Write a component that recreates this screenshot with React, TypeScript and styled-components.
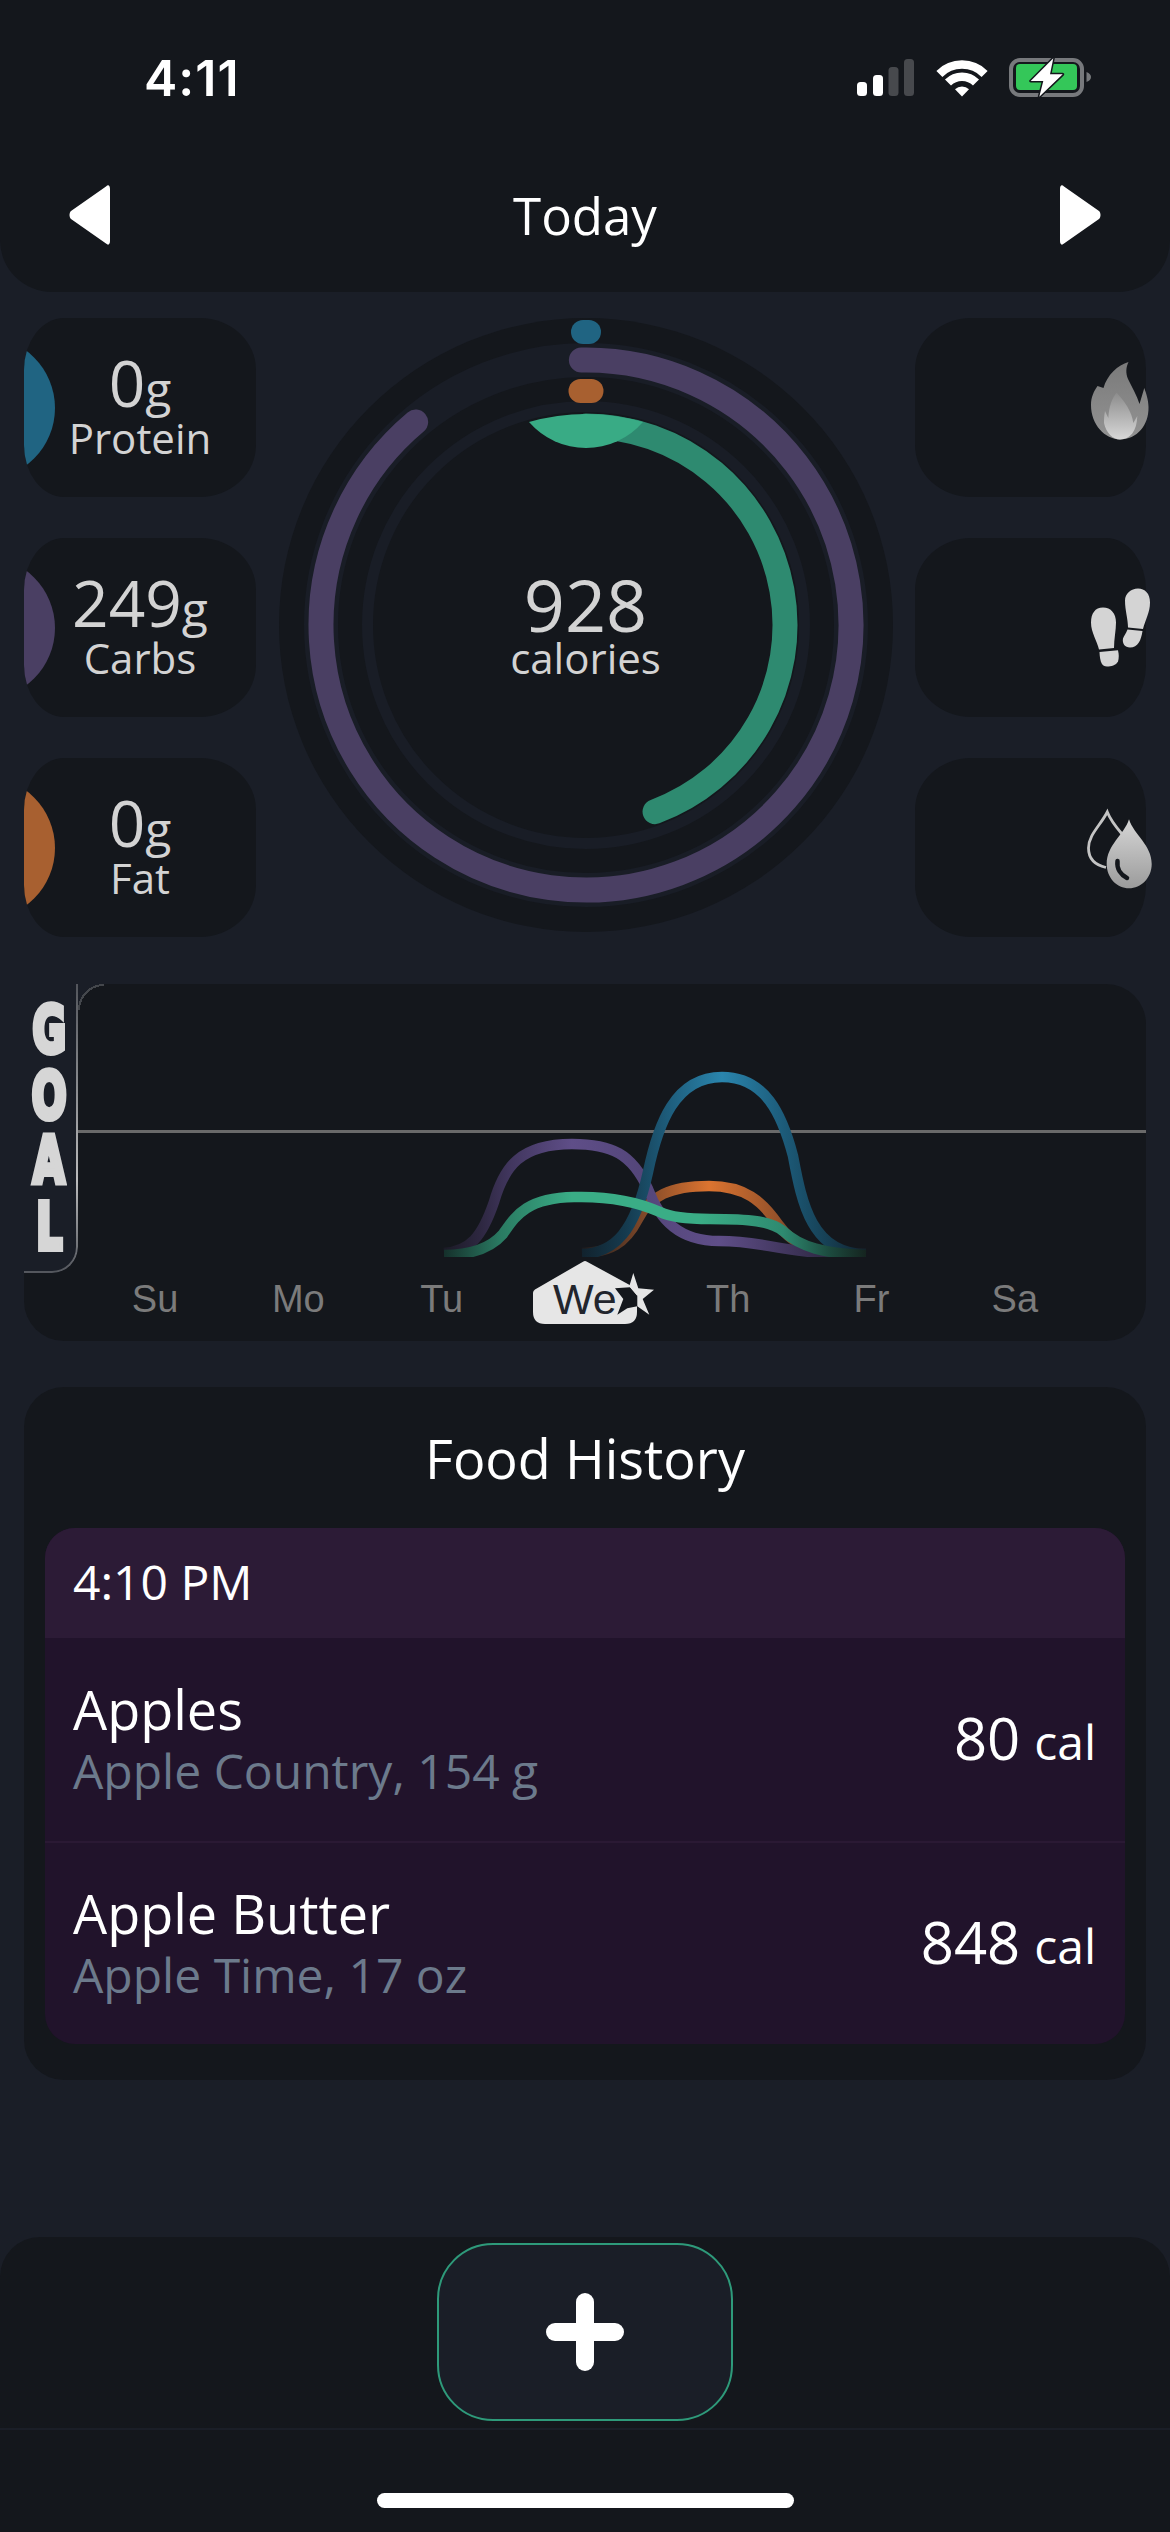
import React from "react";
import styled, { createGlobalStyle } from "styled-components";

const PAGE = "#1a1e27";
const PANEL = "#14171c";

const GlobalStyle = createGlobalStyle`
  html, body {
    margin: 0;
    padding: 0;
    background: ${PAGE};
  }
  * {
    box-sizing: border-box;
  }
`;

const Page = styled.div`
  width: 1170px;
  height: 2532px;
  display: flex;
  flex-direction: column;
  overflow: hidden;
  background: ${PAGE};
  font-family: "Open Sans", "Liberation Sans", sans-serif;
  color: #d3d3d3;
`;

/* header */
const Header = styled.header`
  height: 292px;
  background: ${PANEL};
  border-radius: 0 0 52px 52px;
`;

const StatusBar = styled.div`
  height: 155px;
  padding: 0 78px 0 144px;
  display: flex;
  align-items: center;
  justify-content: space-between;
`;

const Clock = styled.span`
  font-family: Inter, "Liberation Sans", sans-serif;
  font-size: 50px;
  font-weight: 600;
  letter-spacing: 1px;
  color: #fff;
`;

const Nav = styled.nav`
  height: 120px;
  padding: 0 69px;
  display: flex;
  align-items: center;
  justify-content: space-between;
`;

const NavTitle = styled.h1`
  margin: 0;
  font-size: 51px;
  font-weight: 400;
  line-height: 116px;
  color: #fff;
`;

/* macro row */
const MacroRow = styled.section`
  margin-top: 26px;
  padding: 0 24px;
  display: flex;
  justify-content: space-between;
  align-items: flex-start;
`;

const PillColumn = styled.div`
  display: flex;
  flex-direction: column;
  gap: 41px;
`;

const MacroPill = styled.div`
  position: relative;
  width: 232px;
  height: 179px;
  overflow: hidden;
  background: ${PANEL};
  border-radius: 40px 56px 56px 40px / 52px;
  display: flex;
  flex-direction: column;
  align-items: center;
  justify-content: center;
`;

const MacroTab = styled.span<{ $color: string }>`
  position: absolute;
  left: -112px;
  top: 50%;
  width: 143px;
  height: 143px;
  border-radius: 50%;
  transform: translateY(-50%);
  background: ${(p) => p.$color};
`;

const MacroValue = styled.div`
  font-size: 64px;
  line-height: 50px;
`;

const MacroUnit = styled.span`
  font-size: 48px;
`;

const MacroLabel = styled.div`
  margin-top: 3px;
  font-size: 42px;
  line-height: 41px;
`;

const ActivityPill = styled.div`
  width: 231px;
  height: 179px;
  background: ${PANEL};
  border-radius: 56px 40px 40px 56px / 52px;
  display: flex;
  align-items: center;
  justify-content: flex-end;
`;

const ActivityIcon = styled.svg`
  width: 80px;
  height: 100px;
  margin-right: -14px;
  flex: none;
`;

const RingWrap = styled.div`
  position: relative;
  width: 614px;
  height: 614px;
  flex: none;
`;

const RingText = styled.div`
  position: absolute;
  inset: 0;
  display: flex;
  flex-direction: column;
  align-items: center;
  justify-content: center;
`;

const RingValue = styled.div`
  font-size: 72px;
  line-height: 66px;
`;

const RingLabel = styled.div`
  font-size: 42px;
  line-height: 42px;
`;

/* weekly chart */
const ChartPanel = styled.section`
  margin: 47px 24px 0;
  height: 357px;
  background: ${PANEL};
  border-radius: 0 40px 40px 40px;
  overflow: hidden;
`;

const ChartTop = styled.div`
  display: flex;
  height: 289px;
`;

const GoalTab = styled.div`
  position: relative;
  width: 54px;
  flex: none;
  background: ${PAGE};
  border-bottom-right-radius: 26px;
  display: flex;
  flex-direction: column;
  align-items: center;
  padding: 14px 4px 0 0;

  &::before {
    content: "";
    position: absolute;
    inset: 0;
    border-right: 2px solid #d8d8d8;
    border-bottom: 2px solid #d8d8d8;
    border-bottom-right-radius: 26px;
    mask-image: linear-gradient(to bottom, rgba(0, 0, 0, 0.3), rgba(0, 0, 0, 0.85) 68%, rgba(0, 0, 0, 0.3));
  }

  &::after {
    content: "";
    position: absolute;
    left: 100%;
    top: 0;
    width: 26px;
    height: 26px;
    background: radial-gradient(circle at 100% 100%, transparent 24px, #44474c 24px, #44474c 26px, ${PAGE} 26px);
  }
`;

const GoalLetter = styled.span`
  height: 65.5px;
  font-family: "DejaVu Sans", sans-serif;
  font-size: 64px;
  font-weight: 700;
  line-height: 65.5px;
  color: #d6d6d6;
  -webkit-text-stroke: 6px #d6d6d6;
  transform: scaleX(0.64);
`;

const ChartSvg = styled.svg`
  display: block;
  width: 1068px;
  height: 289px;
  flex: none;
`;

const DayRow = styled.div`
  display: grid;
  grid-template-columns: repeat(7, 143.3px);
  padding-left: 59.4px;
`;

const Day = styled.span<{ $active?: boolean }>`
  position: relative;
  text-align: center;
  font-family: "Liberation Sans", Arial, sans-serif;
  font-size: ${(p) => (p.$active ? "43px" : "38px")};
  line-height: 52px;
  color: ${(p) => (p.$active ? "#22252d" : "#7b7b7b")};
`;

const DayLabel = styled.span`
  position: relative;
`;

const DayBadge = styled.svg`
  position: absolute;
  left: 6.7px;
  top: -24px;
  width: 150px;
  height: 85px;
`;

/* food history */
const FoodCard = styled.section`
  margin: 46px 24px 0;
  padding: 0 21px 36px;
  background: ${PANEL};
  border-radius: 40px;
`;

const FoodTitle = styled.h2`
  margin: 0;
  padding-top: 2px;
  font-size: 54px;
  font-weight: 400;
  line-height: 139px;
  text-align: center;
  color: #fff;
`;

const FoodList = styled.div`
  border-radius: 30px;
  overflow: hidden;
  background: #21132b;
`;

const FoodTime = styled.div`
  height: 110px;
  padding-left: 28px;
  background: #2c1b36;
  font-size: 48px;
  line-height: 108px;
  color: #fff;
`;

const FoodRow = styled.div`
  height: 203px;
  padding: 0 29px 0 28px;
  display: flex;
  align-items: center;
  justify-content: space-between;

  & + & {
    border-top: 2px solid #2a1934;
  }
`;

const FoodName = styled.div`
  font-size: 54px;
  line-height: 59px;
  color: #fff;
`;

const FoodMeta = styled.div`
  padding-top: 2px;
  font-size: 48px;
  line-height: 59px;
  color: #6c7a8c;
`;

const FoodCal = styled.div`
  font-size: 58px;
  line-height: 60px;
  color: #fff;
`;

const FoodCalUnit = styled.span`
  margin-left: 14px;
  font-size: 48px;
`;

/* footer */
const Footer = styled.footer`
  margin-top: auto;
  height: 295px;
  background: ${PANEL};
  border-radius: 40px 40px 0 0;
`;

const FooterBar = styled.div`
  height: 193px;
  border-bottom: 2px solid ${PAGE};
  display: flex;
  justify-content: center;
  padding-top: 6px;
`;

const AddButton = styled.button`
  width: 296px;
  height: 178px;
  padding: 0;
  background: ${PAGE};
  border: 2px solid #2e9a7a;
  border-radius: 56px;
  display: flex;
  align-items: center;
  justify-content: center;
`;

const HomeIndicator = styled.div`
  width: 417px;
  height: 15px;
  margin: 63px auto 0;
  border-radius: 8px;
  background: #fff;
`;

// point on a ring, degrees clockwise from 12 o'clock
function polar(r: number, deg: number) {
  const a = (deg * Math.PI) / 180;
  return { x: r * Math.sin(a), y: -r * Math.cos(a) };
}

function arcPath(r: number, from: number, to: number) {
  const s = polar(r, from);
  const e = polar(r, to);
  return `M${s.x} ${s.y} A${r} ${r} 0 ${to - from > 180 ? 1 : 0} 1 ${e.x} ${e.y}`;
}

function CalorieRing() {
  return (
    <svg width="614" height="614" viewBox="-307 -307 614 614">
      <circle r="307" fill="#14171c" />
      <circle r="265" fill="none" stroke="#191d26" strokeWidth="34" />
      <circle r="218.5" fill="none" stroke="#191d26" strokeWidth="11" />
      <rect x="-15" y="-305" width="30" height="24" rx="12" fill="#206482" />
      <rect x="-17.5" y="-246" width="35" height="24" rx="12" fill="#a86030" />
      <path d={arcPath(265, -1, 320)} fill="none" stroke="#4a3f63" strokeWidth="25" strokeLinecap="round" />
      <path d={arcPath(199, 0, 159.7)} fill="none" stroke="#2e8a70" strokeWidth="25" strokeLinecap="round" />
      <path d="M-57 -203 A211 211 0 0 1 57 -203 A75.5 75.5 0 0 1 -57 -203 Z" fill="#39ab85" />
    </svg>
  );
}

function NavArrow({ flip }: { flip?: boolean }) {
  return (
    <svg width="41" height="60" viewBox="0 0 41 60">
      <path
        transform={flip ? "matrix(-1 0 0 1 41 0)" : undefined}
        d="M37 1.5C39.5 -1 41 1 41 4L41 56C41 59 39.5 61 37 58.5L2 34C0 32 0 28 2 26Z"
        fill="#fff"
      />
    </svg>
  );
}

function StatusIcons() {
  return (
    <svg width="235" height="39" viewBox="857 58 235 39">
      <rect x="857" y="82" width="10" height="14" rx="3.5" fill="#fff" />
      <rect x="873" y="75" width="10" height="21" rx="3.5" fill="#fff" />
      <rect x="888.5" y="67" width="10" height="29" rx="3.5" fill="#47494d" />
      <rect x="904" y="59" width="10" height="37" rx="3.5" fill="#47494d" />
      <g transform="translate(962 96.5)" fill="none" stroke="#fff" strokeWidth="8.5">
        <path d="M-22.6 -22.6A32 32 0 0 1 22.6 -22.6" />
        <path d="M-14 -14A19.8 19.8 0 0 1 14 -14" />
        <path d="M0 0L-7 -7.2A10 10 0 0 1 7 -7.2Z" fill="#fff" stroke="none" />
      </g>
      <rect x="1011" y="60" width="71" height="35" rx="9" fill="none" stroke="#77797c" strokeWidth="4" />
      <rect x="1016" y="64" width="61" height="26" rx="4" fill="#34c759" />
      <path d="M1086.5 72C1089.5 73 1091 75 1091 77C1091 79 1089.5 81 1086.5 82Z" fill="#77797c" />
      <path
        d="M1053.3 58.3L1030.7 81H1043.3L1039.3 96.7L1062.7 74.3H1050Z"
        fill="#fff"
        stroke="#14171c"
        strokeWidth="3"
        strokeLinejoin="round"
        paintOrder="stroke"
      />
    </svg>
  );
}

function FlameIcon() {
  return (
    <ActivityIcon viewBox="0 7 80 100">
      <defs>
        <linearGradient id="flameOuter" x1="0" y1="0" x2="0" y2="1">
          <stop offset="0" stopColor="#7a7a7a" />
          <stop offset="1" stopColor="#939393" />
        </linearGradient>
        <linearGradient id="flameInner" x1="0" y1="0" x2="0" y2="1">
          <stop offset="0" stopColor="#8c8c8c" />
          <stop offset="1" stopColor="#d8d8d8" />
        </linearGradient>
      </defs>
      <path
        d="M48.5 11C38 14 27 24 23.5 37L17.5 35C14 40 11 46 11 54C11 74 25 88 40 88.5C57 88.5 69 74 68.5 56C68.5 49 66 42 64.3 37L59.5 53C57 45 52 36 48 28C45.5 22 46 16 48.5 11Z"
        fill="url(#flameOuter)"
      />
      <path
        d="M36.7 41.7C32 47 29 55 28.3 67L25 60C24 65 24 69 24 72C26 82 33 88.5 40 88.5C50 88.5 57 80 57.3 65L53.3 72C52 60 44 50 36.7 41.7Z"
        fill="url(#flameInner)"
      />
    </ActivityIcon>
  );
}

function StepsIcon() {
  return (
    <ActivityIcon viewBox="-5 -2.5 80 100">
      <g fill="#d4d4d4">
        <path d="M18 27C26 27 31 33 31 42C31 50 29 58 29 67.5L14 69C12 60 6 52 6 42C6 33 10 27 18 27Z" />
        <path d="M14.5 71.5L33 69.8C34 74 34 78 33 81C31 85 26 86 22 86C17 86 15 82 14.5 71.5Z" />
        <path d="M53 8C60 8 65 13 65 22C65 32 60 40 58 48.5L43 47C43 38 40 30 40 20C40 13 46 8 53 8Z" />
        <path d="M42.5 49L57.5 50.5C56 60 53 67 45 67C40 67 37 63 38 58C39 55 41 53 42.5 49Z" />
      </g>
    </ActivityIcon>
  );
}

function WaterIcon() {
  return (
    <ActivityIcon viewBox="0 -3 80 100">
      <defs>
        <linearGradient id="waterFill" x1="0" y1="0" x2="0" y2="1">
          <stop offset="0" stopColor="#d6d6d6" />
          <stop offset="1" stopColor="#9b9b9b" />
        </linearGradient>
      </defs>
      <path
        d="M42 33C36 26 30 18 27.3 11C20 25 8.5 34 8.5 47C8.5 58 15 64 26 66.5"
        fill="none"
        stroke="#c4c4c4"
        strokeWidth="2.8"
      />
      <path
        d="M49 18.3C44 34 26.7 44 26.7 63C26.7 77 37 87.3 49 87.3C61 87.3 71.7 77 71.7 63C71.7 44 54 34 49 18.3Z"
        fill="url(#waterFill)"
      />
      <path d="M37.5 60C36.5 68 41 74 47 77" fill="none" stroke="#14171c" strokeWidth="4.5" strokeLinecap="round" />
    </ActivityIcon>
  );
}

// the lines are brightest on their plateaus, stops are [x, colour]
const curves: { id: string; d: string; stops: [number, string][] }[] = [
  {
    id: "orange",
    d: "M582 1254C610 1253 625 1245 638 1220C650 1197 670 1187 709 1187C745 1187 762 1202 778 1225C795 1250 820 1255 866 1255",
    stops: [
      [582, "#1c1a1c"],
      [640, "#7a4628"],
      [709, "#dc7430"],
      [778, "#94512a"],
      [830, "#2a2020"],
      [866, "#1a1a1c"],
    ],
  },
  {
    id: "purple",
    d: "M444 1254C470 1252 482 1238 494 1203C504 1168 520 1145 572 1145C612 1145 632 1155 648 1190C660 1222 680 1242 719 1242C770 1242 775 1255 866 1255",
    stops: [
      [444, "#1b1a26"],
      [480, "#2d2740"],
      [510, "#41365e"],
      [572, "#5f4e88"],
      [640, "#54467a"],
      [719, "#5f4e88"],
      [790, "#40355c"],
      [866, "#1b1a26"],
    ],
  },
  {
    id: "blue",
    d: "M582 1255C615 1254 635 1232 648 1173C658 1125 675 1078 722 1078C765 1078 782 1115 793 1157C802 1205 812 1255 866 1255",
    stops: [
      [582, "#11222d"],
      [625, "#153a4e"],
      [665, "#1d5a78"],
      [722, "#2a85ad"],
      [785, "#1c5a78"],
      [830, "#163e52"],
      [866, "#11222d"],
    ],
  },
  {
    id: "green",
    d: "M444 1256C470 1256 490 1250 503 1235C515 1218 525 1199 574 1198C610 1197 640 1204 660 1213C672 1219 690 1220 710 1220C750 1220 770 1222 783 1232C800 1248 825 1255 866 1256",
    stops: [
      [444, "#15302b"],
      [500, "#2a7a62"],
      [572, "#3aad86"],
      [700, "#3aad86"],
      [783, "#2e8a70"],
      [830, "#1c4a3e"],
      [866, "#15241f"],
    ],
  },
];

function WeekChart() {
  return (
    <ChartSvg viewBox="78 985 1068 289">
      <defs>
        {curves.map((c) => {
          const x1 = c.stops[0][0];
          const x2 = c.stops[c.stops.length - 1][0];
          return (
            <linearGradient key={c.id} id={c.id} gradientUnits="userSpaceOnUse" x1={x1} y1="0" x2={x2} y2="0">
              {c.stops.map(([x, color]) => (
                <stop key={x} offset={(x - x1) / (x2 - x1)} stopColor={color} />
              ))}
            </linearGradient>
          );
        })}
        <clipPath id="plotClip">
          <rect x="78" y="985" width="1068" height="273" />
        </clipPath>
      </defs>
      <rect x="78" y="1131" width="1068" height="3" fill="#6a6a6a" />
      <g clipPath="url(#plotClip)" fill="none" strokeWidth="10.5">
        {curves.map((c) => (
          <path key={c.id} d={c.d} stroke={`url(#${c.id})`} />
        ))}
      </g>
    </ChartSvg>
  );
}

function TodayBadge() {
  return (
    <DayBadge viewBox="0 0 150 85">
      <path
        d="M63 12.7Q65 11.5 67 12.7L117 40V63Q117 75 105 75H25Q13 75 13 63V44Q13 41.7 15 40.5Z"
        fill="#e6e6e6"
      />
      <path d="M95 39.3L110 38.3L117.3 46.7V57.3L107.3 59.3L97.3 65.7L103.3 50Z" fill="#14171c" />
      <path
        d="M113.3 24L118.3 39.3L134 40.7L122.7 50L129.3 65.7L117.3 57.3V46.7L109.3 37.3Z"
        fill="#e6e6e6"
      />
    </DayBadge>
  );
}

const macros = [
  { value: "0", label: "Protein", color: "#206482" },
  { value: "249", label: "Carbs", color: "#4a3f63" },
  { value: "0", label: "Fat", color: "#a86030" },
];

const days = ["Su", "Mo", "Tu", "We", "Th", "Fr", "Sa"];

const foods = [
  { name: "Apples", meta: "Apple Country, 154 g", cal: "80" },
  { name: "Apple Butter", meta: "Apple Time, 17 oz", cal: "848" },
];

export default function App() {
  return (
    <Page>
      <GlobalStyle />
      <Header>
        <StatusBar>
          <Clock>4:11</Clock>
          <StatusIcons />
        </StatusBar>
        <Nav>
          <NavArrow />
          <NavTitle>Today</NavTitle>
          <NavArrow flip />
        </Nav>
      </Header>

      <MacroRow>
        <PillColumn>
          {macros.map((m) => (
            <MacroPill key={m.label}>
              <MacroTab $color={m.color} />
              <MacroValue>
                {m.value}
                <MacroUnit>g</MacroUnit>
              </MacroValue>
              <MacroLabel>{m.label}</MacroLabel>
            </MacroPill>
          ))}
        </PillColumn>
        <RingWrap>
          <CalorieRing />
          <RingText>
            <RingValue>928</RingValue>
            <RingLabel>calories</RingLabel>
          </RingText>
        </RingWrap>
        <PillColumn>
          <ActivityPill>
            <FlameIcon />
          </ActivityPill>
          <ActivityPill>
            <StepsIcon />
          </ActivityPill>
          <ActivityPill>
            <WaterIcon />
          </ActivityPill>
        </PillColumn>
      </MacroRow>

      <ChartPanel>
        <ChartTop>
          <GoalTab>
            {"GOAL".split("").map((letter) => (
              <GoalLetter key={letter}>{letter}</GoalLetter>
            ))}
          </GoalTab>
          <WeekChart />
        </ChartTop>
        <DayRow>
          {days.map((d) => (
            <Day key={d} $active={d === "We"}>
              {d === "We" && <TodayBadge />}
              <DayLabel>{d}</DayLabel>
            </Day>
          ))}
        </DayRow>
      </ChartPanel>

      <FoodCard>
        <FoodTitle>Food History</FoodTitle>
        <FoodList>
          <FoodTime>4:10 PM</FoodTime>
          {foods.map((f) => (
            <FoodRow key={f.name}>
              <div>
                <FoodName>{f.name}</FoodName>
                <FoodMeta>{f.meta}</FoodMeta>
              </div>
              <FoodCal>
                {f.cal}
                <FoodCalUnit>cal</FoodCalUnit>
              </FoodCal>
            </FoodRow>
          ))}
        </FoodList>
      </FoodCard>

      <Footer>
        <FooterBar>
          <AddButton aria-label="Add food">
            <svg width="78" height="78" viewBox="0 0 78 78">
              <rect x="30" y="0" width="18" height="78" rx="9" fill="#fff" />
              <rect x="0" y="30" width="78" height="18" rx="9" fill="#fff" />
            </svg>
          </AddButton>
        </FooterBar>
        <HomeIndicator />
      </Footer>
    </Page>
  );
}
